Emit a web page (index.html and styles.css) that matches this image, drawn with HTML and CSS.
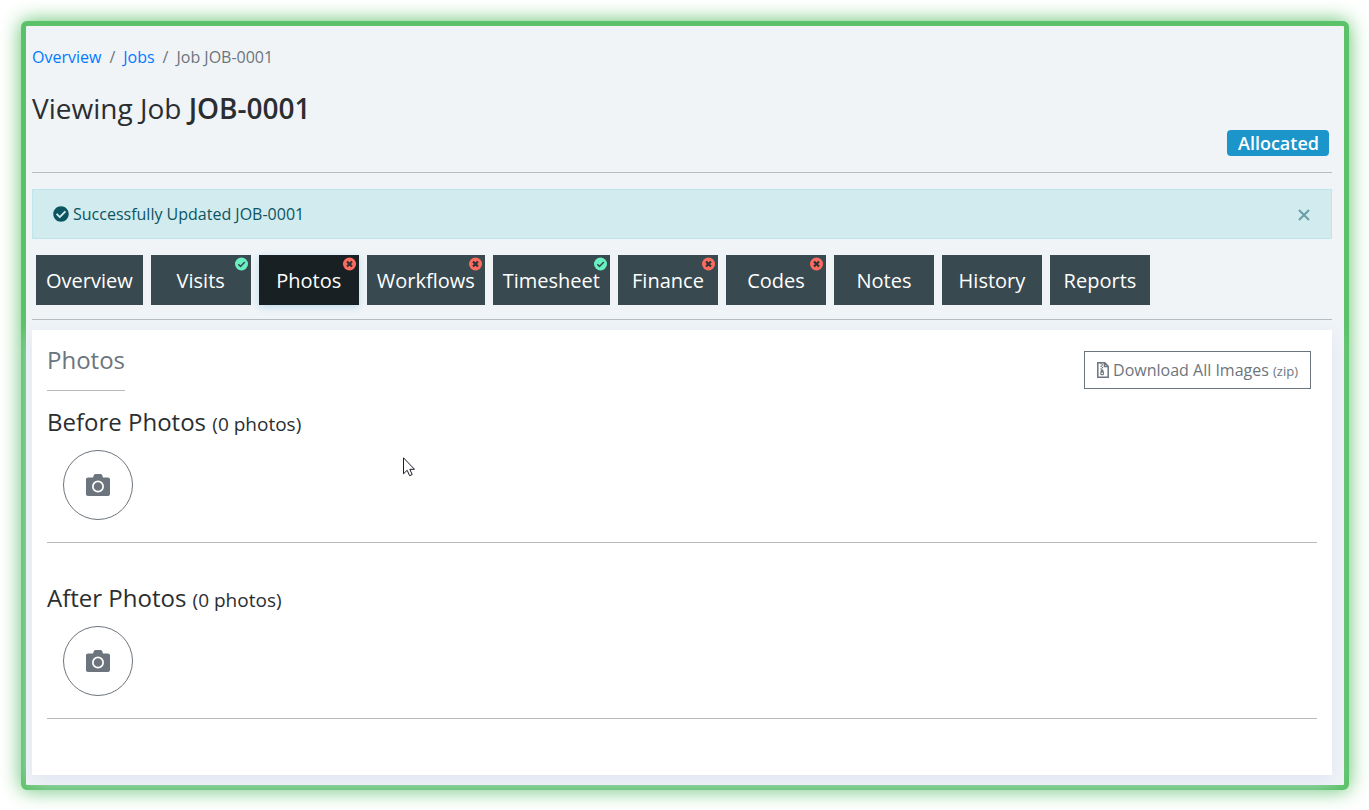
FILE: index.html
```html
<!DOCTYPE html>
<html lang="en">
<head>
    <meta charset="UTF-8">
    <meta name="viewport" content="width=device-width, initial-scale=1.0">
    <title>Viewing Job JOB-0001</title>
    <link rel="stylesheet" href="styles.css">
</head>
<body>

<!-- shared icons -->
<svg class="sprite" xmlns="http://www.w3.org/2000/svg">
  <symbol id="check-circle" viewBox="0 0 512 512">
    <path d="M504 256c0 137-111 248-248 248S8 393 8 256 119 8 256 8s248 111 248 248zM227.300 387.300l184-184c6.200-6.200 6.200-16.400 0-22.600l-22.600-22.600c-6.200-6.200-16.400-6.200-22.600 0L216 308.100l-70.100-70.100c-6.200-6.200-16.400-6.200-22.600 0l-22.600 22.600c-6.200 6.200-6.200 16.400 0 22.600l104 104c6.200 6.300 16.400 6.300 22.600.1z"/>
  </symbol>
  <symbol id="tick" viewBox="0 0 14 14">
    <circle cx="6.500" cy="7" r="6.500" fill="#69f0c0"/>
    <path d="M3.300 7.200l2.200 2.200L9.800 5" fill="none" stroke="#37474f" stroke-width="1.500"/>
  </symbol>
  <symbol id="cross" viewBox="0 0 14 14">
    <circle cx="6.500" cy="7" r="6.500" fill="#ff6b5e"/>
    <path d="M4 4.500l5 5M9 4.500l-5 5" fill="none" stroke="#2c3236" stroke-width="2.200"/>
  </symbol>
  <symbol id="camera" viewBox="0 0 24 22">
    <path fill-rule="evenodd" d="M2 3.500h5l.8-2.300C8.100.4 8.700 0 9.500 0h5c.8 0 1.400.4 1.700 1.200l.8 2.300h5c1.200 0 2 .8 2 2V20c0 1.200-.8 2-2 2H2c-1.200 0-2-.8-2-2V5.500c0-1.200.8-2 2-2zM12 6.500a6 6 0 1 0 0 12 6 6 0 0 0 0-12zm0 1.700a4.300 4.300 0 1 1 0 8.600 4.300 4.300 0 0 1 0-8.600z"/>
  </symbol>
</svg>

<div class="frame">
  <nav aria-label="breadcrumb">
    <ol class="breadcrumb">
      <li><a href="#">Overview</a></li>
      <li><a href="#">Jobs</a></li>
      <li>Job JOB-0001</li>
    </ol>
  </nav>

  <header class="page-header">
    <h1>Viewing Job <strong>JOB-0001</strong></h1>
    <span class="badge">Allocated</span>
  </header>

  <div class="alert" role="alert">
    <svg class="alert-icon"><use href="#check-circle"/></svg>
    <span>Successfully Updated JOB-0001</span>
    <button type="button" class="close" aria-label="Close">
      <svg viewBox="0 0 12 12"><path d="M1 1l10 10M11 1l-10 10"/></svg>
    </button>
  </div>

  <nav class="tabs">
    <a href="#">Overview</a>
    <a href="#">Visits<svg><use href="#tick"/></svg></a>
    <a href="#" class="active">Photos<svg><use href="#cross"/></svg></a>
    <a href="#">Workflows<svg><use href="#cross"/></svg></a>
    <a href="#">Timesheet<svg><use href="#tick"/></svg></a>
    <a href="#">Finance<svg><use href="#cross"/></svg></a>
    <a href="#">Codes<svg><use href="#cross"/></svg></a>
    <a href="#">Notes</a>
    <a href="#">History</a>
    <a href="#">Reports</a>
  </nav>

  <main class="card">
    <div class="card-header">
      <h2>Photos</h2>
      <button type="button" class="download">
        <svg viewBox="0 0 12 16">
          <path d="M1 .800h6.800L11.200 4.200V15.200H.800V.800zM7.500 1v3.500H11" fill="none" stroke="currentColor" stroke-width="1.500"/>
          <path d="M3.500 1h1.300v1.300H3.500zM4.800 2.300h1.300v1.300H4.800zM3.500 3.600h1.300v1.300H3.500zM4.800 4.900h1.300v1.300H4.800zM3.500 6.200h1.300v1.300H3.500z"/>
          <path fill-rule="evenodd" d="M4 7.500h2.200l.9 3.700c.3 1.200-.6 2.100-1.900 2.100s-2.300-.9-2-2.100zM5.200 10.600c-1.300 0-1.300 1.600 0 1.600s1.300-1.600 0-1.600z"/>
        </svg>
        <span>Download All Images <small>(zip)</small></span>
      </button>
    </div>

    <section class="photos">
      <h3>Before Photos <small>(0 photos)</small></h3>
      <button type="button" class="add-photo" aria-label="Add before photo"><svg><use href="#camera"/></svg></button>
    </section>

    <section class="photos">
      <h3>After Photos <small>(0 photos)</small></h3>
      <button type="button" class="add-photo" aria-label="Add after photo"><svg><use href="#camera"/></svg></button>
    </section>
  </main>

  <svg class="cursor" viewBox="0 0 12 20">
    <path d="M.5.800V16.800L4.200 13.300 6.600 18.700 9.200 17.600 6.800 12.300H11.500z" fill="#fff" stroke="#1c1c28"/>
  </svg>
</div>

</body>
</html>
```

FILE: styles.css
```css
* {
  box-sizing: border-box;
}

body {
  margin: 0;
  padding: 21px 20px 20px 21px;
  background: #fff;
  font-family: 'Open Sans', sans-serif;
  font-size: 16px;
  line-height: 24px;
  color: #2b2e31;
}

h1, h2, h3, ol {
  margin: 0;
  padding: 0;
  font-weight: 400;
}

button {
  font: inherit;
  cursor: pointer;
}

svg {
  display: block;
  fill: currentColor;
}

.sprite {
  position: absolute;
  width: 0;
  height: 0;
}

.frame {
  position: relative;
  border: 5px solid #5cc26a;
  border-radius: 6px;
  padding: 19px 12px 10px 6px;
  background: #f0f4f7;
  box-shadow: 0 0 20px #5cc26a;
}

.breadcrumb {
  display: flex;
  list-style: none;
  color: #6c757d;
}

.breadcrumb li + li::before {
  content: "/";
  padding: 0 8px;
}

.breadcrumb a {
  color: #007bff;
  text-decoration: none;
}

.page-header {
  display: flex;
  flex-direction: column;
  margin-top: 22px;
  padding-bottom: 16px;
  border-bottom: 1px solid #b8bbbe;
}

h1 {
  font-size: 28px;
  line-height: 34px;
}

h1 strong {
  font-weight: 600;
}

.badge {
  align-self: flex-end;
  margin: 5px 3px 0 0;
  padding: 0 10px 0 11px;
  border-radius: 4px;
  background: #1c95cb;
  color: #fff;
  font-size: 18px;
  font-weight: 600;
  line-height: 26px;
}

.alert {
  display: flex;
  align-items: center;
  gap: 4px;
  height: 50px;
  margin-top: 16px;
  padding: 0 20px;
  border: 1px solid #bee5eb;
  background: #d1ebef;
  color: #0c5460;
}

.alert-icon {
  width: 16px;
  height: 16px;
}

.close {
  margin-left: auto;
  padding: 2px 0 0;
  border: 0;
  background: none;
  color: #6a9da5;
}

.close svg {
  width: 14px;
  height: 12px;
  stroke: currentColor;
  stroke-width: 2;
}

.tabs {
  display: flex;
  gap: 8px;
  padding: 16px 4px 14px;
  border-bottom: 1px solid #b5babf;
}

.tabs a {
  position: relative;
  min-width: 100px;
  padding: 2px 10px 0;
  background: #394950;
  color: #fff;
  font-size: 20px;
  line-height: 48px;
  text-align: center;
  text-decoration: none;
}

.tabs a.active {
  background: #182023;
  box-shadow: 0 2px 8px #bddcec;
}

.tabs svg {
  position: absolute;
  top: 2px;
  right: 2px;
  width: 14px;
  height: 14px;
}

.card {
  margin-top: 10px;
  padding: 14px 15px 56px;
  background: #fff;
  box-shadow: 0 6px 18px #dfe4f2;
}

.card-header {
  display: flex;
  justify-content: space-between;
  align-items: flex-start;
}

h2 {
  padding-bottom: 15px;
  border-bottom: 1px solid #b8bbbe;
  color: #6c757d;
  font-size: 24px;
  line-height: 31px;
}

.download {
  display: flex;
  align-items: center;
  gap: 4px;
  height: 38px;
  margin: 7px 6px 0 0;
  padding: 0 12px;
  border: 1px solid #6c757d;
  background: none;
  color: #6c757d;
}

.download svg {
  width: 12px;
  height: 16px;
}

.download small {
  font-size: 13px;
}

.photos {
  padding: 15px 0 22px;
  border-bottom: 1px solid #b8bbbe;
}

.photos + .photos {
  margin-top: 24px;
}

h3 {
  font-size: 24px;
  line-height: 32px;
}

h3 small {
  font-size: 19px;
}

.add-photo {
  display: flex;
  align-items: center;
  justify-content: center;
  width: 70px;
  height: 70px;
  margin: 10px 0 0 16px;
  border: 1px solid #6c757d;
  border-radius: 50%;
  background: none;
  color: #6c757d;
}

.add-photo svg {
  width: 24px;
  height: 22px;
}

/* mouse pointer drawn over the page */
.cursor {
  position: absolute;
  top: 431px;
  left: 377px;
  width: 12px;
  height: 20px;
}
```
